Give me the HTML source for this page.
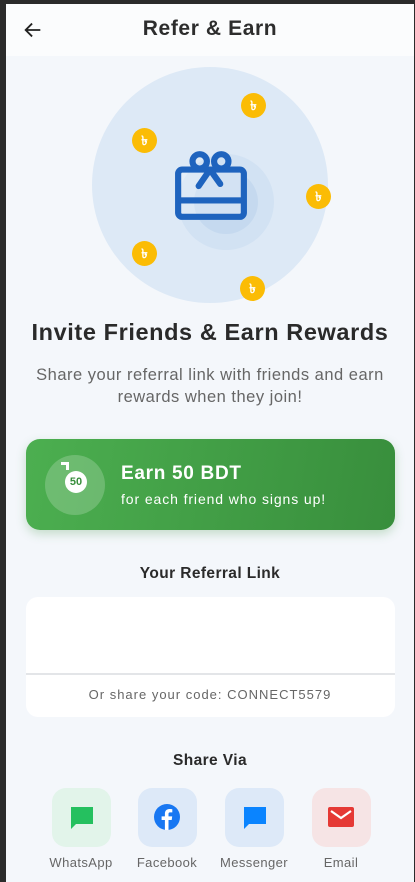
<!DOCTYPE html>
<html><head><style>
*{margin:0;padding:0;box-sizing:border-box}
body{width:415px;height:882px;background:#2b2b2b;font-family:"Liberation Sans",sans-serif;overflow:hidden;position:relative}
.page{position:absolute;left:6px;top:4px;right:1px;bottom:0;background:#f4f7fb;overflow:hidden}
.abs{position:absolute}
.t{position:absolute;left:0;right:0;text-align:center}
.coin{position:absolute;width:25px;height:25px;border-radius:50%;background:#fbbc05;color:#fff;font-size:13px;font-weight:bold;text-align:center;line-height:25px}
.ic{position:absolute;top:784px;width:59px;height:59px;border-radius:14px}
.lb{position:absolute;top:851px;width:90px;text-align:center;font-size:13px;color:#666;letter-spacing:0.4px}
</style></head><body>
<div class="page">
 <div class="abs" style="left:0;top:0;right:0;height:52px;background:#fbfcfd"></div>
 <svg class="abs" style="left:16px;top:15px" width="22" height="22" viewBox="0 0 24 24"><path d="M20 12H5M11 5l-7 7 7 7" fill="none" stroke="#222" stroke-width="2"/></svg>
 <div class="t" style="top:13px;font-size:21px;font-weight:bold;color:#2d2d2d;letter-spacing:0.6px">Refer &amp; Earn</div>

 <div class="abs" style="left:86px;top:63px;width:236px;height:236px;border-radius:50%;background:#dde9f6"></div>
 <div class="abs" style="left:172px;top:150px;width:96px;height:96px;border-radius:50%;background:#d2e2f3"></div>
 <div class="abs" style="left:188px;top:166px;width:64px;height:64px;border-radius:50%;background:#c5d9ef"></div>
 <svg class="abs" style="left:167px;top:145px" width="76" height="72" viewBox="0 0 74 70">
  <circle cx="26" cy="12" r="7" fill="none" stroke="#1e63be" stroke-width="6"/>
  <circle cx="47" cy="12" r="7" fill="none" stroke="#1e63be" stroke-width="6"/>
  <rect x="5" y="20" width="64" height="46" rx="4" fill="rgba(255,255,255,0.25)" stroke="#1e63be" stroke-width="6"/>
  <rect x="5" y="47" width="64" height="6" fill="#1e63be"/>
  <path d="M36 20 L25 36 M36 20 L46 34" stroke="#1e63be" stroke-width="6" stroke-linecap="round"/>
 </svg>
 <div class="coin" style="left:235px;top:89px">৳</div>
 <div class="coin" style="left:126px;top:124px">৳</div>
 <div class="coin" style="left:300px;top:180px">৳</div>
 <div class="coin" style="left:126px;top:237px">৳</div>
 <div class="coin" style="left:234px;top:272px">৳</div>

 <div class="t" style="top:315px;font-size:23.5px;font-weight:bold;color:#2a2a2a;letter-spacing:0.6px">Invite Friends &amp; Earn Rewards</div>
 <div class="t" style="top:360px;font-size:16.5px;line-height:22px;color:#666;letter-spacing:0.5px">Share your referral link with friends and earn<br>rewards when they join!</div>

 <div class="abs" style="left:20px;top:435px;width:369px;height:91px;border-radius:14px;background:linear-gradient(100deg,#4caf50,#388e3c);box-shadow:0 4px 10px rgba(56,142,60,0.25)"></div>
 <div class="abs" style="left:39px;top:451px;width:60px;height:60px;border-radius:50%;background:rgba(255,255,255,0.2)"></div>
 <div class="abs" style="left:59px;top:467px;width:22px;height:22px;border-radius:50%;background:#fff;color:#388e3c;font-size:11px;font-weight:bold;text-align:center;line-height:22px">50</div>
 <div class="abs" style="left:55px;top:458px;width:8px;height:8px;border:3px solid #fff;border-left:none;border-bottom:none"></div>
 <div class="abs" style="left:115px;top:459px;font-size:19px;font-weight:bold;color:#fff;letter-spacing:0.7px">Earn 50 BDT</div>
 <div class="abs" style="left:115px;top:487px;font-size:14px;color:#fff;letter-spacing:0.9px">for each friend who signs up!</div>

 <div class="t" style="top:561px;font-size:15.5px;font-weight:bold;color:#2a2a2a;letter-spacing:0.4px">Your Referral Link</div>
 <div class="abs" style="left:20px;top:593px;width:369px;height:120px;border-radius:12px;background:#fff"></div>
 <div class="abs" style="left:20px;top:669px;width:369px;height:2px;background:#e3e5e8"></div>
 <div class="t" style="top:683px;font-size:13px;color:#666;letter-spacing:1px">Or share your code: CONNECT5579</div>

 <div class="t" style="top:748px;font-size:15.5px;font-weight:bold;color:#2a2a2a;letter-spacing:0.4px">Share Via</div>
 <div class="ic" style="left:46px;background:#e2f4ea"></div>
 <svg class="abs" style="left:62px;top:800px" width="28" height="28" viewBox="0 0 28 28"><path d="M3 3h22v17H8l-5 5z" fill="#25c05f"/></svg>
 <div class="ic" style="left:132px;background:#dde9f8"></div>
 <svg class="abs" style="left:147px;top:799px" width="28" height="28" viewBox="0 0 28 28"><circle cx="14" cy="14" r="13" fill="#1877f2"/><path d="M15.5 27V17h3.2l.5-3.6h-3.7v-2.2c0-1 .3-1.8 1.8-1.8h2V6.2c-.4 0-1.5-.2-2.8-.2-2.8 0-4.6 1.7-4.6 4.8v2.6H8.6V17h3.3v10z" fill="#fff"/></svg>
 <div class="ic" style="left:219px;background:#dde9f8"></div>
 <svg class="abs" style="left:235px;top:800px" width="28" height="28" viewBox="0 0 28 28"><path d="M3 3h22v17H8l-5 5z" fill="#0a84ff"/></svg>
 <div class="ic" style="left:306px;background:#f6e4e5"></div>
 <svg class="abs" style="left:321px;top:801px" width="28" height="24" viewBox="0 0 28 24"><rect x="1" y="2" width="26" height="20" rx="2" fill="#e53935"/><path d="M4 6l10 7 10-7" fill="none" stroke="#fff" stroke-width="2.2"/></svg>
 <div class="lb" style="left:30px">WhatsApp</div>
 <div class="lb" style="left:116px">Facebook</div>
 <div class="lb" style="left:203px">Messenger</div>
 <div class="lb" style="left:290px">Email</div>
</div>
</body></html>
